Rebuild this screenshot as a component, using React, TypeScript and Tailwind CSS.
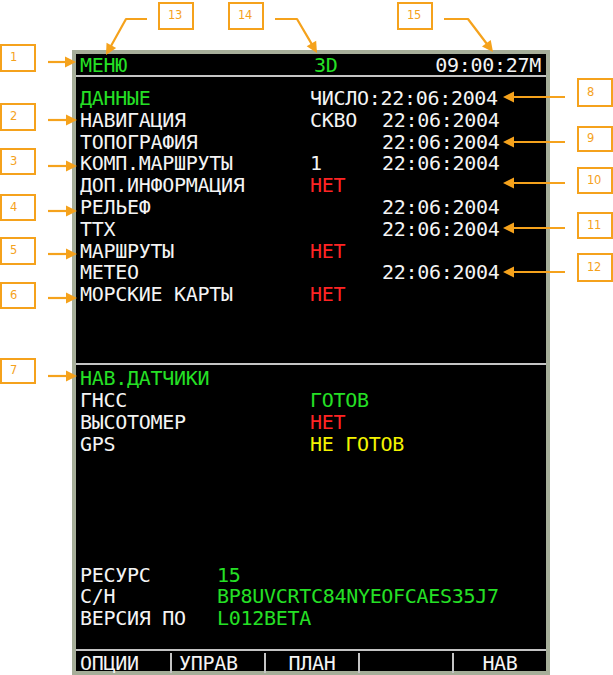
import React from "react";

const ORANGE = "#f5a21c";

type Pt = [number, number];

function Arrow({ pts }: { pts: Pt[] }) {
  const n = pts.length;
  const [x1, y1] = pts[n - 2];
  const [x2, y2] = pts[n - 1];
  const dx = x2 - x1;
  const dy = y2 - y1;
  const len = Math.hypot(dx, dy);
  const ux = dx / len;
  const uy = dy / len;
  const hl = 11;
  const hw = 5.5;
  const bx = x2 - ux * hl;
  const by = y2 - uy * hl;
  const px = -uy;
  const py = ux;
  const line = [...pts.slice(0, n - 1), [bx + ux * 1, by + uy * 1] as Pt];
  return (
    <g>
      <polyline
        points={line.map((p) => p.join(",")).join(" ")}
        fill="none"
        stroke={ORANGE}
        strokeWidth={2.2}
        strokeLinejoin="round"
      />
      <polygon
        points={`${x2},${y2} ${bx + px * hw},${by + py * hw} ${bx - px * hw},${by - py * hw}`}
        fill={ORANGE}
      />
    </g>
  );
}

function Box({ n, x, y, h = 28 }: { n: string; x: number; y: number; h?: number }) {
  return (
    <div
      className="absolute w-[36px] border-2 border-[#f5a21c] bg-white flex items-center pl-[8px] text-[11.5px] text-[#f5a21c] font-['DejaVu_Sans',sans-serif]"
      style={{ left: x, top: y, height: h }}
    >
      {n}
    </div>
  );
}

const G = "text-[#25e025]";
const W = "text-[#f4f4f4]";
const R = "text-[#ff2424]";
const Y = "text-[#f4f400]";

type Row = { a: string; ac?: string; b?: string; bc?: string; c?: string; span?: boolean };

const topRows: Row[] = [
  { a: "ДАННЫЕ", ac: G, b: "ЧИСЛО:22:06:2004", span: true },
  { a: "НАВИГАЦИЯ", b: "СКВО", c: "22:06:2004" },
  { a: "ТОПОГРАФИЯ", c: "22:06:2004" },
  { a: "КОМП.МАРШРУТЫ", b: "1", c: "22:06:2004" },
  { a: "ДОП.ИНФОРМАЦИЯ", b: "НЕТ", bc: R },
  { a: "РЕЛЬЕФ", c: "22:06:2004" },
  { a: "ТТХ", c: "22:06:2004" },
  { a: "МАРШРУТЫ", b: "НЕТ", bc: R },
  { a: "МЕТЕО", c: "22:06:2004" },
  { a: "МОРСКИЕ КАРТЫ", b: "НЕТ", bc: R },
];

export default function App() {
  return (
    <div className="relative w-[613px] h-[675px] bg-white overflow-hidden font-['DejaVu_Sans_Mono',monospace] text-[20px] tracking-[-0.3px] whitespace-pre">
      <div className="pl-[72px] pt-[50px]">
        <div className="w-[478px] h-[625px] bg-[#a6ae99] p-[4px]">
          <div className="flex flex-col h-full bg-black">
            {/* header */}
            <div className="h-[21px] grid grid-cols-[234px_1fr_auto] items-center pl-[4px] pr-[5px] leading-[21px] pt-[1px]">
              <span className={G}>МЕНЮ</span>
              <span className={G}>3D</span>
              <span className={W}>09:00:27M</span>
            </div>
            <div className="h-[2px] bg-[#c4c4c4]" />
            {/* top section */}
            <div className="h-[286px] pt-[11px] pl-[4px]">
              <div className="grid grid-cols-[230px_72px_1fr] auto-rows-[21.8px] leading-[21.8px]">
                {topRows.map((r, i) =>
                  r.span ? (
                    <React.Fragment key={i}>
                      <span className={r.ac ?? W}>{r.a}</span>
                      <span className={`col-span-2 ${W}`}>{r.b}</span>
                    </React.Fragment>
                  ) : (
                    <React.Fragment key={i}>
                      <span className={r.ac ?? W}>{r.a}</span>
                      <span className={r.bc ?? W}>{r.b ?? ""}</span>
                      <span className={W}>{r.c ?? ""}</span>
                    </React.Fragment>
                  )
                )}
              </div>
            </div>
            <div className="h-[2px] bg-[#c4c4c4]" />
            {/* bottom section */}
            <div className="h-[284px] flex flex-col justify-between pl-[4px] pt-[2px] pb-[19px]">
              <div className="grid grid-cols-[230px_1fr] auto-rows-[22px] leading-[22px]">
                <span className={`col-span-2 ${G}`}>НАВ.ДАТЧИКИ</span>
                <span className={W}>ГНСС</span>
                <span className={G}>ГОТОВ</span>
                <span className={W}>ВЫСОТОМЕР</span>
                <span className={R}>НЕТ</span>
                <span className={W}>GPS</span>
                <span className={Y}>НЕ ГОТОВ</span>
              </div>
              <div className="grid grid-cols-[137px_1fr] auto-rows-[21.8px] leading-[21.8px]">
                <span className={W}>РЕСУРС</span>
                <span className={G}>15</span>
                <span className={W}>С/Н</span>
                <span className={G}>BP8UVCRTC84NYEOFCAES35J7</span>
                <span className={W}>ВЕРСИЯ ПО</span>
                <span className={G}>L012BETA</span>
              </div>
            </div>
            <div className="h-[2px] bg-[#c4c4c4]" />
            {/* buttons */}
            <div className="h-[20px] grid grid-cols-5 leading-[20px] pt-[2px]">
              <div className={`flex justify-start pl-[4px] ${W}`}>ОПЦИИ</div>
              <div className={`flex justify-start pl-[7px] border-l-2 border-[#c4c4c4] ${W}`}>УПРАВ</div>
              <div className={`flex justify-center border-l-2 border-[#c4c4c4] ${W}`}>ПЛАН</div>
              <div className={`flex justify-center border-l-2 border-[#c4c4c4] ${W}`}></div>
              <div className={`flex justify-center border-l-2 border-[#c4c4c4] ${W}`}>НАВ</div>
            </div>
          </div>
        </div>
      </div>

      {/* annotations */}
      <svg className="absolute inset-0 pointer-events-none" width={613} height={675}>
        <Arrow pts={[[147, 19], [126, 19], [106, 55]]} />
        <Arrow pts={[[275, 19], [297, 19], [317, 53]]} />
        <Arrow pts={[[444, 19], [468, 19], [493, 52]]} />
        <Arrow pts={[[48, 62], [76, 62]]} />
        <Arrow pts={[[48, 120], [77, 120]]} />
        <Arrow pts={[[48, 166], [77, 166]]} />
        <Arrow pts={[[48, 211], [77, 211]]} />
        <Arrow pts={[[48, 254], [77, 254]]} />
        <Arrow pts={[[48, 298], [77, 298]]} />
        <Arrow pts={[[48, 376], [77, 376]]} />
        <Arrow pts={[[565, 97], [503, 97]]} />
        <Arrow pts={[[565, 142], [503, 142]]} />
        <Arrow pts={[[565, 183], [503, 183]]} />
        <Arrow pts={[[565, 228], [503, 228]]} />
        <Arrow pts={[[565, 272], [503, 272]]} />
      </svg>
      <Box n="13" x={158} y={2} />
      <Box n="14" x={228} y={2} />
      <Box n="15" x={397} y={2} />
      <Box n="1" x={0} y={44} />
      <Box n="2" x={0} y={103} />
      <Box n="3" x={0} y={148} h={27} />
      <Box n="4" x={0} y={194} h={27} />
      <Box n="5" x={0} y={237} />
      <Box n="6" x={0} y={282} h={27} />
      <Box n="7" x={0} y={358} h={26} />
      <Box n="8" x={577} y={78} h={29} />
      <Box n="9" x={577} y={126} h={26} />
      <Box n="10" x={577} y={167} h={27} />
      <Box n="11" x={577} y={212} h={27} />
      <Box n="12" x={577} y={253} h={29} />
    </div>
  );
}
